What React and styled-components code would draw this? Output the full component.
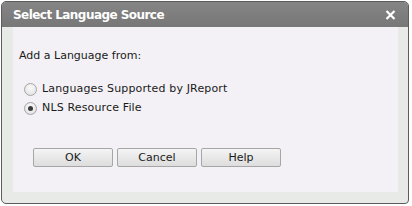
import styled, { createGlobalStyle } from "styled-components";

const GlobalStyle = createGlobalStyle`
    html, body {
        margin: 0;
        padding: 0;
        background: #ffffff;
    }
`;

const Dialog = styled.div`
    margin: 1px 0 0 1px;
    width: 406px;
    height: 201px;
    border: 1px solid #5c5c5c;
    border-radius: 5px 5px 4px 5px;
    background: #e8eae8;
    display: flex;
    flex-direction: column;
    overflow: hidden;
    font-family: "DejaVu Sans", Verdana, sans-serif;
`;

const TitleBar = styled.div`
    height: 25px;
    background: linear-gradient(#858585, #777777);
    display: flex;
    align-items: center;
    justify-content: space-between;
    padding: 0 12px 0 11px;
`;

const Title = styled.span`
    color: #ffffff;
    font-family: "DejaVu Sans", Verdana, sans-serif;
    font-weight: bold;
    font-size: 12px;
    letter-spacing: -0.55px;
`;

const Close = styled.svg`
    width: 11px;
    height: 10px;
`;

const Frame = styled.div`
    flex: 1;
    padding: 0 10px 11px 11px;
    display: flex;
`;

const Panel = styled.div`
    flex: 1;
    background: #f3f1f5;
    padding: 22px 0 0 6px;
    display: flex;
    flex-direction: column;
`;

const Label = styled.div`
    font-size: 11px;
    line-height: 14px;
    color: #1a1a1a;
`;

const Options = styled.div`
    margin-top: 19px;
    display: flex;
    flex-direction: column;
    gap: 5px;
`;

const OptionRow = styled.label`
    display: flex;
    align-items: center;
    gap: 5px;
    padding-left: 5px;
    font-size: 11px;
    line-height: 14px;
    color: #1a1a1a;
    letter-spacing: 0.15px;
`;

const Radio = styled.span`
    width: 11px;
    height: 11px;
    border-radius: 50%;
    border: 1px solid #a4a4a4;
    background: radial-gradient(circle at 50% 35%, #fafafa, #dedede);
    display: flex;
    align-items: center;
    justify-content: center;

    &::after {
        content: "";
        width: 5px;
        height: 5px;
        border-radius: 50%;
        background: ${(p) => (p.$checked ? "#3c3c3c" : "transparent")};
    }
`;

const Buttons = styled.div`
    margin: 33px 0 0 14px;
    display: flex;
    gap: 4px;
`;

const Button = styled.button`
    width: 80px;
    height: 19px;
    padding: 0;
    border: 1px solid #a6a6a6;
    border-radius: 2px;
    background: linear-gradient(#f4f4f4, #dddddd);
    font-family: "DejaVu Sans", Verdana, sans-serif;
    font-size: 11px;
    color: #1a1a1a;
`;

function App() {
    const options = [
        { name: "Languages Supported by JReport", checked: false },
        { name: "NLS Resource File", checked: true },
    ];

    return (
        <>
            <GlobalStyle />
            <Dialog>
                <TitleBar>
                    <Title>Select Language Source</Title>
                    <Close viewBox="0 0 11 10">
                        <path d="M1.5 1 L9.5 9 M9.5 1 L1.5 9" stroke="#ffffff" strokeWidth="2.2" />
                    </Close>
                </TitleBar>
                <Frame>
                    <Panel>
                        <Label>Add a Language from:</Label>
                        <Options>
                            {options.map((o) => (
                                <OptionRow key={o.name}>
                                    <Radio $checked={o.checked} />
                                    {o.name}
                                </OptionRow>
                            ))}
                        </Options>
                        <Buttons>
                            <Button>OK</Button>
                            <Button>Cancel</Button>
                            <Button>Help</Button>
                        </Buttons>
                    </Panel>
                </Frame>
            </Dialog>
        </>
    );
}

export default App;
